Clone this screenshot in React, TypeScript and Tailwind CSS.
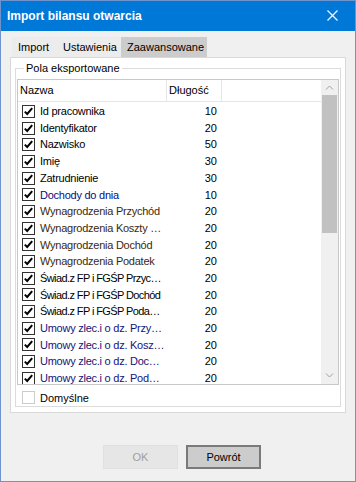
import React from 'react';

type Row = { name: string; len: number; color: string; tight?: boolean };

const rows: Row[] = [
  { name: 'Id pracownika', len: 10, color: 'text-black' },
  { name: 'Identyfikator', len: 20, color: 'text-black' },
  { name: 'Nazwisko', len: 50, color: 'text-black' },
  { name: 'Imię', len: 30, color: 'text-black' },
  { name: 'Zatrudnienie', len: 30, color: 'text-black' },
  { name: 'Dochody do dnia', len: 10, color: 'text-[#0a0a80]' },
  { name: 'Wynagrodzenia Przychód', len: 20, color: 'text-[#3a2810]' },
  { name: 'Wynagrodzenia Koszty …', len: 20, color: 'text-[#3a2810]' },
  { name: 'Wynagrodzenia Dochód', len: 20, color: 'text-[#3a2810]' },
  { name: 'Wynagrodzenia Podatek', len: 20, color: 'text-[#3a2810]' },
  { name: 'Świad.z FP i FGŚP Przyc…', len: 20, color: 'text-black', tight: true },
  { name: 'Świad.z FP i FGŚP Dochód', len: 20, color: 'text-black', tight: true },
  { name: 'Świad.z FP i FGŚP Poda…', len: 20, color: 'text-black', tight: true },
  { name: 'Umowy zlec.i o dz. Przy…', len: 20, color: 'text-[#14147a]' },
  { name: 'Umowy zlec.i o dz. Kosz…', len: 20, color: 'text-[#14147a]' },
  { name: 'Umowy zlec.i o dz. Doc…', len: 20, color: 'text-[#14147a]' },
  { name: 'Umowy zlec.i o dz. Pod…', len: 20, color: 'text-[#14147a]' },
];

function CheckBox({ checked, light }: { checked?: boolean; light?: boolean }) {
  return (
    <div
      className={`w-[13px] h-[13px] shrink-0 bg-white border ${light ? 'border-[#cccccc]' : 'border-[#333333]'} flex items-center justify-center`}
    >
      {checked && (
        <svg width="11" height="11" viewBox="0 0 11 11">
          <path d="M1.8 5.6 L4.2 8 L9.2 2.2" fill="none" stroke="#000" strokeWidth="2" />
        </svg>
      )}
    </div>
  );
}

export default function App() {
  return (
    <div
      className="w-[356px] h-[482px] bg-[#f0f0f0] border border-[#6f93cc] flex flex-col text-[11px] text-black overflow-hidden"
      style={{ fontFamily: '"Liberation Sans", Arial, sans-serif' }}
    >
      {/* title bar */}
      <div className="h-[31px] shrink-0 bg-[#0078d7] -mx-px -mt-px flex items-center justify-between pl-[7px] pr-[18px]">
        <span className="text-white font-bold text-[12px]">Import bilansu otwarcia</span>
        <svg width="11" height="11" viewBox="0 0 11 11">
          <path d="M0.5 0.5 L10.5 10.5 M10.5 0.5 L0.5 10.5" stroke="#fff" strokeWidth="1.2" />
        </svg>
      </div>

      {/* tabs */}
      <div className="mt-[6px] ml-[11px] h-[20px] flex items-stretch">
        <div className="w-[46px] pl-[6px] bg-[#ececec] flex items-center">Import</div>
        <div className="w-[63px] pl-[5px] bg-[#ececec] flex items-center">Ustawienia</div>
        <div className="w-[86px] pl-[6px] bg-[#cccccc] flex items-center">Zaawansowane</div>
      </div>

      {/* tab panel */}
      <div className="ml-[9px] w-[336px] h-[356px] border border-[#d9d9d9] bg-white pt-[3px] px-[4px]">
        <fieldset className="border border-[#dcdcdc] h-[346px] px-px flex flex-col">
          <legend className="ml-[7px] px-[2px] leading-[14px]">Pola eksportowane</legend>

          {/* list */}
          <div className="mt-[4px] h-[308px] border border-[#c8c8c8] flex overflow-hidden">
            <div className="flex-1 flex flex-col overflow-hidden">
              <div className="h-[22px] shrink-0 flex border-b border-[#e5e5e5]">
                <div className="w-[149px] pl-[2px] flex items-center border-r border-[#e5e5e5]">Nazwa</div>
                <div className="w-[55px] pl-[2px] flex items-center border-r border-[#e5e5e5]">Długość</div>
              </div>
              <div className="pt-px">
                {rows.map((r) => (
                  <div key={r.name} className="h-[16.7px] flex items-center">
                    <div className="w-[149px] pl-[4px] flex items-center gap-[5px] whitespace-nowrap overflow-hidden">
                      <CheckBox checked />
                      <span className={`${r.color} ${r.tight ? 'tracking-[-0.6px]' : 'tracking-[-0.25px]'}`}>
                        {r.name}
                      </span>
                    </div>
                    <div className="w-[50px] text-right">{r.len}</div>
                  </div>
                ))}
              </div>
            </div>
            {/* scrollbar */}
            <div className="w-[17px] shrink-0 bg-[#f0f0f0] flex flex-col items-center">
              <div className="h-[15px] w-full flex items-center justify-center">
                <svg width="9" height="5" viewBox="0 0 9 5">
                  <path d="M1 4.5 L4.5 1 L8 4.5" fill="none" stroke="#a0a0a0" strokeWidth="1" />
                </svg>
              </div>
              <div className="w-[15px] h-[138px] bg-[#c1c1c1]" />
              <div className="flex-1" />
              <div className="h-[16px] w-full flex items-center justify-center">
                <svg width="9" height="5" viewBox="0 0 9 5">
                  <path d="M1 0.5 L4.5 4 L8 0.5" fill="none" stroke="#a0a0a0" strokeWidth="1" />
                </svg>
              </div>
            </div>
          </div>

          <div className="mt-[5px] ml-[5px] flex items-center gap-[5px]">
            <CheckBox light />
            <span>Domyślne</span>
          </div>
        </fieldset>
      </div>

      {/* buttons */}
      <div className="mt-[32px] pl-[102px] flex gap-[8px]">
        <div className="w-[75px] h-[24px] bg-[#e6e6e6] border border-[#e0e0e0] flex items-center justify-center text-[#a0a0a0]">
          OK
        </div>
        <div className="w-[75px] h-[24px] bg-[#cccccc] border-2 border-[#7a7a7a] flex items-center justify-center">
          Powrót
        </div>
      </div>
    </div>
  );
}
